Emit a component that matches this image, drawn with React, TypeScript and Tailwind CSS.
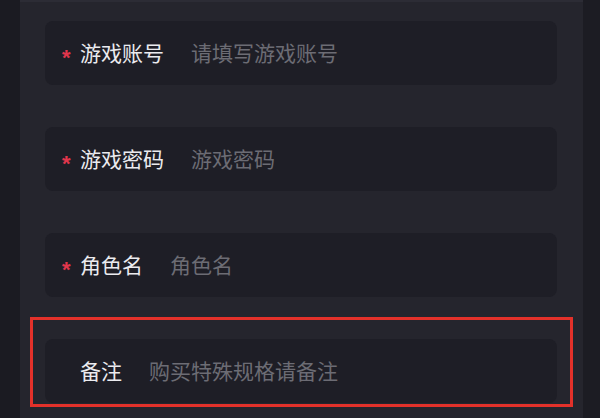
import React from "react";

type Field = {
  label: string;
  placeholder: string;
  required: boolean;
};

const fields: Field[] = [
  { label: "游戏账号", placeholder: "请填写游戏账号", required: true },
  { label: "游戏密码", placeholder: "游戏密码", required: true },
  { label: "角色名", placeholder: "角色名", required: true },
  { label: "备注", placeholder: "购买特殊规格请备注", required: false },
];

function FieldRow({ field }: { field: Field }) {
  return (
    <div className="flex h-[64px] items-center rounded-[8px] bg-[#1e1e26] pl-[17px]">
      <span
        className="flex h-[20px] w-[18px] items-center pt-[10px] text-[22px] font-bold leading-none text-[#e2364c]"
        style={{ fontFamily: '"Liberation Sans", sans-serif' }}
      >
        {field.required ? "*" : ""}
      </span>
      <span className="text-[21px] text-[#ebebef]">{field.label}</span>
      <input
        className="ml-[27px] flex-1 bg-transparent text-[21px] text-[#ebebef] outline-none placeholder:text-[#6c6c74]"
        placeholder={field.placeholder}
      />
    </div>
  );
}

export default function App() {
  return (
    <div
      className="flex h-[418px] w-[600px] overflow-hidden bg-[#1b1b22]"
      style={{ fontFamily: '"Noto Sans CJK SC", "Noto Sans", sans-serif' }}
    >
      <div className="w-[20px] bg-[#1b1b22]" />
      <div className="relative flex-1 border-t-[2px] border-[#2c2c35] bg-[#25252d]">
        <div className="flex flex-col gap-[42px] pl-[25px] pr-[26px] pt-[19px]">
          {fields.map((field) => (
            <FieldRow key={field.label} field={field} />
          ))}
        </div>
        {/* highlight annotation around the remark field */}
        <div className="absolute left-[10px] top-[315px] h-[90px] w-[543px] border-[3px] border-[#e3312a]" />
      </div>
      <div className="w-[17px] bg-[#1c1c23]" />
    </div>
  );
}
